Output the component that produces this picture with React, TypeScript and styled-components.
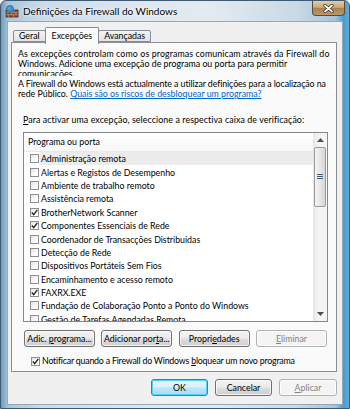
import React from 'react';
import styled, {createGlobalStyle} from 'styled-components';

const GlobalStyle = createGlobalStyle`
  html, body {
    margin: 0;
    padding: 0;
    background: #ffffff;
  }
`;

const Frame = styled.div`
  width: 350px;
  height: 409px;
  box-sizing: border-box;
  border: 1px solid #3d5a70;
  border-radius: 6px 6px 0 0;
  background: linear-gradient(90deg, #6f9bbb 0%, #a9c6da 2%, #ccdce8 12%, #dde7ef 40%, #e3ebf1 60%, #c9d9e5 85%, #a5c4da 96%, #3d9fdb 98.5%, #6aa9d0 100%);
  display: flex;
  flex-direction: column;
  font-family: Lato, "Open Sans", sans-serif;
  font-size: 8.8px;
  color: #000;
  overflow: hidden;
`;

const TitleBar = styled.div`
  height: 20px;
  display: flex;
  align-items: flex-start;
`;

const TitleIcon = styled.svg`
  width: 14px;
  height: 14px;
  margin: 3px 0 0 4px;
  flex: none;
`;

const TitleText = styled.div`
  margin: 4px 0 0 4px;
  font-size: 10px;
  line-height: 12px;
  color: #000;
  text-shadow: 0 0 4px #ffffff, 0 0 2px #ffffff;
`;

const CloseButton = styled.div`
  margin-left: auto;
  margin-right: 4px;
  width: 33px;
  height: 15px;
  box-sizing: border-box;
  border: 1px solid #5c4a33;
  border-top: none;
  border-radius: 0 0 4px 4px;
  background: linear-gradient(#e2cca8 0%, #c9a97c 45%, #a9834f 52%, #bb976a 100%);
  display: flex;
  align-items: center;
  justify-content: center;
`;

const Client = styled.div`
  margin: 0 6px 3px 6px;
  flex: 1;
  box-sizing: border-box;
  border: 1px solid #93a8b8;
  background: #f0f0f0;
  padding: 5px 5px 0 3px;
  display: flex;
  flex-direction: column;
`;

const TabStrip = styled.div`
  height: 16px;
  display: flex;
  align-items: flex-end;
  padding-left: 2px;
  margin-bottom: -1px;
  position: relative;
  z-index: 1;
`;

const Tab = styled.div<{$active?: boolean}>`
  box-sizing: border-box;
  height: ${p => (p.$active ? '17px' : '12px')};
  margin-bottom: ${p => (p.$active ? '-1px' : '1px')};
  margin-right: -1px;
  padding: ${p => (p.$active ? '1px 6px 0' : '0 5px')};
  border: 1px solid #898c95;
  border-bottom: ${p => (p.$active ? 'none' : '1px solid #898c95')};
  border-radius: 2px 2px 0 0;
  background: ${p => (p.$active ? '#fafafa' : 'linear-gradient(#f3f3f3, #e2e2e2)')};
  line-height: ${p => (p.$active ? '13px' : '10px')};
  white-space: nowrap;
  position: relative;
  z-index: ${p => (p.$active ? 2 : 1)};
`;

const Panel = styled.div`
  height: 330px;
  box-sizing: border-box;
  border: 1px solid #898c95;
  background: #fafafa;
  padding: 6px 0 0 6px;
  display: flex;
  flex-direction: column;
`;

const Para = styled.div<{$h: number; $gap?: number}>`
  height: ${p => p.$h}px;
  margin-top: ${p => p.$gap ?? 0}px;
  overflow: hidden;
`;

const Line = styled.div<{$ls?: number}>`
  line-height: 10px;
  white-space: nowrap;
  letter-spacing: ${p => p.$ls ?? 0}px;
`;

const Link = styled.span`
  color: #0066cc;
  text-decoration: underline;
`;

const Key = styled.span`
  text-decoration: underline;
`;

const Prompt = styled.div`
  margin: 16px 0 0 5px;
  line-height: 10px;
  white-space: nowrap;
  letter-spacing: 0.1px;
`;

const ListBox = styled.div`
  margin: 7px 0 0 5px;
  width: 305px;
  height: 190px;
  box-sizing: border-box;
  border: 1px solid #828790;
  background: #ffffff;
  display: flex;
`;

const ListBody = styled.div`
  flex: 1;
  overflow: hidden;
`;

const Header = styled.div`
  height: 19px;
  box-sizing: border-box;
  padding-left: 4px;
  line-height: 18px;
  background: linear-gradient(#ffffff, #f6f7f9);
  border-bottom: 1px solid #e6e8eb;
  white-space: nowrap;
`;

const Row = styled.div`
  height: 13.4px;
  display: flex;
  align-items: center;
  padding-left: 6px;
`;

const RowLabel = styled.div<{$selected?: boolean}>`
  flex: 1;
  margin-left: 1px;
  height: 13px;
  line-height: 13px;
  padding-left: 1px;
  white-space: nowrap;
  background: ${p => (p.$selected ? '#ececec' : 'transparent')};
`;

const Box = styled.span`
  width: 9px;
  height: 9px;
  box-sizing: border-box;
  border: 1px solid #8e8f8f;
  background: linear-gradient(135deg, #e2e2e2, #ffffff 70%);
  display: inline-flex;
  align-items: center;
  justify-content: center;
  flex: none;
`;

const ScrollBar = styled.div`
  width: 14px;
  display: flex;
  flex-direction: column;
  background: linear-gradient(90deg, #e6e6e6, #f4f4f4 40%, #f4f4f4);
`;

const Arrow = styled.div`
  height: 14px;
  display: flex;
  align-items: center;
  justify-content: center;
  flex: none;
`;

const Thumb = styled.div`
  height: 60px;
  margin: 0 1px;
  box-sizing: border-box;
  border: 1px solid #9a9a9a;
  border-radius: 2px;
  background: linear-gradient(90deg, #f4f4f4, #e6e6e6 50%, #d6d6d6);
  display: flex;
  align-items: center;
  justify-content: center;
  flex: none;
`;

const Track = styled.div`
  flex: 1;
`;

const ButtonRow = styled.div`
  margin: 8px 0 0 6px;
  width: 303px;
  display: flex;
  justify-content: space-between;
`;

const Button = styled.div<{$disabled?: boolean; $default?: boolean; $w: number}>`
  width: ${p => p.$w}px;
  height: 17px;
  box-sizing: border-box;
  border: 1px solid ${p => (p.$disabled ? '#adb2b5' : p.$default ? '#3c7fb1' : '#707070')};
  border-radius: 3px;
  background: ${p =>
    p.$disabled
      ? '#f4f4f4'
      : p.$default
      ? 'linear-gradient(#eaf6fd 0%, #d9f0fc 48%, #bee6fd 52%, #a7d9f5 100%)'
      : 'linear-gradient(#f2f2f2 0%, #ebebeb 48%, #dddddd 52%, #cfcfcf 100%)'};
  box-shadow: inset 0 0 0 1px ${p => (p.$default ? '#48d6fb' : 'rgba(255,255,255,0.7)')};
  color: ${p => (p.$disabled ? '#838383' : '#000')};
  line-height: 15px;
  text-align: center;
  white-space: nowrap;
`;

const CheckRow = styled.div`
  margin: 9px 0 0 13px;
  display: flex;
  align-items: center;
  gap: 2px;
  height: 10px;
  line-height: 10px;
  white-space: nowrap;
  letter-spacing: -0.2px;
`;

const Footer = styled.div`
  margin-top: 7px;
  display: flex;
  justify-content: flex-end;
  gap: 7px;
`;

const Check = ({checked}: {checked?: boolean}) => (
  <Box>
    {checked && (
      <svg width="7" height="7" viewBox="0 0 7 7">
        <path d="M0.8 3.6 L2.7 5.6 L6.3 1" fill="none" stroke="#2b2b2b" strokeWidth="1.4" />
      </svg>
    )}
  </Box>
);

const rows: [string, boolean][] = [
  ['Administração remota', false],
  ['Alertas e Registos de Desempenho', false],
  ['Ambiente de trabalho remoto', false],
  ['Assistência remota', false],
  ['BrotherNetwork Scanner', true],
  ['Componentes Essenciais de Rede', true],
  ['Coordenador de Transacções Distribuídas', false],
  ['Detecção de Rede', false],
  ['Dispositivos Portáteis Sem Fios', false],
  ['Encaminhamento e acesso remoto', false],
  ['FAXRX.EXE', true],
  ['Fundação de Colaboração Ponto a Ponto do Windows', false],
  ['Gestão de Tarefas Agendadas Remota', false],
];

export default function App() {
  return (
    <>
      <GlobalStyle />
      <Frame>
        <TitleBar>
          <TitleIcon viewBox="0 0 14 14">
            <rect x="1" y="6" width="12" height="7" fill="#8a4b2c" stroke="#4e2a18" strokeWidth="0.8" />
            <path d="M1 8.4 H13 M1 10.7 H13 M4 6 V8.4 M9 6 V8.4 M6.5 8.4 V10.7 M11 8.4 V10.7 M3.5 10.7 V13 M8.5 10.7 V13" stroke="#c9a27e" strokeWidth="0.6" />
            <circle cx="5" cy="5" r="3.6" fill="#3f8fd6" stroke="#1f5b96" strokeWidth="0.6" />
            <path d="M3 3.5 Q4.5 2.6 5.6 3.8 Q5 5.4 3.4 5.8 Z" fill="#6cbf4a" />
          </TitleIcon>
          <TitleText>Definições da Firewall do Windows</TitleText>
          <CloseButton>
            <svg width="11" height="9" viewBox="0 0 11 9">
              <path d="M2 1.5 L9 7.5 M9 1.5 L2 7.5" stroke="#3b2c1c" strokeWidth="3.2" strokeLinecap="round" />
              <path d="M2 1.5 L9 7.5 M9 1.5 L2 7.5" stroke="#ffffff" strokeWidth="1.8" strokeLinecap="round" />
            </svg>
          </CloseButton>
        </TitleBar>
        <Client>
          <TabStrip>
            <Tab>Geral</Tab>
            <Tab $active>Excepções</Tab>
            <Tab>Avançadas</Tab>
          </TabStrip>
          <Panel>
            <Para $h={27}>
              <Line $ls={0.12}>As excepções controlam como os programas comunicam através da Firewall do</Line>
              <Line>Windows. Adicione uma excepção de programa ou porta para permitir</Line>
              <Line>comunicações.</Line>
            </Para>
            <Para $h={20} $gap={3}>
              <Line $ls={-0.08}>A Firewall do Windows está actualmente a utilizar definições para a localização na</Line>
              <Line>
                rede Público. <Link>Quais são os riscos de desbloquear um programa?</Link>
              </Line>
            </Para>
            <Prompt>
              <Key>P</Key>ara activar uma excepção, seleccione a respectiva caixa de verificação:
            </Prompt>
            <ListBox>
              <ListBody>
                <Header>Programa ou porta</Header>
                {rows.map(([name, checked], i) => (
                  <Row key={name}>
                    <Check checked={checked} />
                    <RowLabel $selected={i === 0}>{name}</RowLabel>
                  </Row>
                ))}
              </ListBody>
              <ScrollBar>
                <Arrow>
                  <svg width="7" height="4" viewBox="0 0 7 4">
                    <path d="M0 4 L3.5 0 L7 4 Z" fill="#4d4d4d" />
                  </svg>
                </Arrow>
                <Thumb>
                  <svg width="6" height="6" viewBox="0 0 6 6">
                    <path d="M0 0.5 H6 M0 2.5 H6 M0 4.5 H6" stroke="#3f5d7a" strokeWidth="1" />
                  </svg>
                </Thumb>
                <Track />
                <Arrow>
                  <svg width="7" height="4" viewBox="0 0 7 4">
                    <path d="M0 0 L7 0 L3.5 4 Z" fill="#4d4d4d" />
                  </svg>
                </Arrow>
              </ScrollBar>
            </ListBox>
            <ButtonRow>
              <Button $w={71}>Adic. <Key>p</Key>rograma...</Button>
              <Button $w={71}>Adicionar por<Key>t</Key>a...</Button>
              <Button $w={71}>Propri<Key>e</Key>dades</Button>
              <Button $w={71} $disabled><Key>E</Key>liminar</Button>
            </ButtonRow>
            <CheckRow>
              <Check checked />
              <span>
                Notificar quando a Firewall do Windows <Key>b</Key>loquear um novo programa
              </span>
            </CheckRow>
          </Panel>
          <Footer>
            <Button $w={57} $default>OK</Button>
            <Button $w={57}>Cancelar</Button>
            <Button $w={58} $disabled><Key>A</Key>plicar</Button>
          </Footer>
        </Client>
      </Frame>
    </>
  );
}
